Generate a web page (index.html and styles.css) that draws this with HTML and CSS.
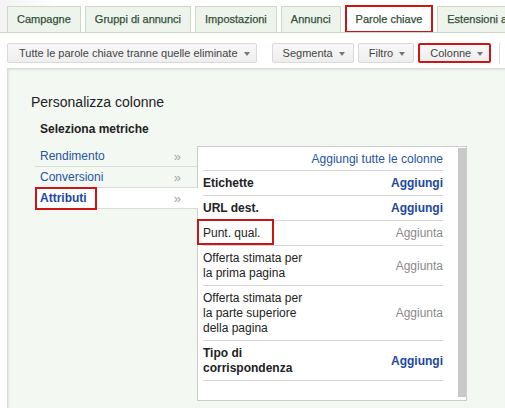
FILE: index.html
```html
<!DOCTYPE html>
<html lang="it">
<head>
<meta charset="utf-8">
<title>Personalizza colonne</title>
<link rel="stylesheet" href="styles.css">
</head>
<body>
<div class="tabs">
  <div class="tab">Campagne</div>
  <div class="tab">Gruppi di annunci</div>
  <div class="tab">Impostazioni</div>
  <div class="tab">Annunci</div>
  <div class="tab active">Parole chiave</div>
  <div class="tab">Estensioni annunci</div>
</div>
<div class="toolbar">
  <div class="btn wide">Tutte le parole chiave tranne quelle eliminate <span class="caret"></span></div>
  <div class="btn">Segmenta <span class="caret"></span></div>
  <div class="btn">Filtro <span class="caret"></span></div>
  <div class="btn marked">Colonne <span class="caret"></span></div>
  <div class="sep"></div>
</div>
<div class="panel">
  <div class="title">Personalizza colonne</div>
  <div class="subtitle">Seleziona metriche</div>
  <div class="picker">
    <div class="cats">
      <div class="cat"><span>Rendimento</span><span class="chev">»</span></div>
      <div class="cat"><span>Conversioni</span><span class="chev">»</span></div>
      <div class="cat sel"><span>Attributi</span><span class="chev">»</span><span class="mark mark-cat"></span></div>
    </div>
    <div class="box">
      <div class="list">
        <div class="row head"><span class="link">Aggiungi tutte le colonne</span></div>
        <div class="row"><span class="label b">Etichette</span><span class="add">Aggiungi</span></div>
        <div class="row"><span class="label b">URL dest.</span><span class="add">Aggiungi</span></div>
        <div class="row"><span class="label">Punt. qual.</span><span class="added">Aggiunta</span><span class="mark mark-row"></span></div>
        <div class="row"><span class="label">Offerta stimata per<br>la prima pagina</span><span class="added">Aggiunta</span></div>
        <div class="row"><span class="label">Offerta stimata per<br>la parte superiore<br>della pagina</span><span class="added">Aggiunta</span></div>
        <div class="row"><span class="label b">Tipo di<br>corrispondenza</span><span class="add">Aggiungi</span></div>
      </div>
      <div class="scroll"></div>
    </div>
  </div>
</div>
</body>
</html>
```
FILE: styles.css
```css
html, body {
  margin: 0;
  padding: 0;
  background: #fff;
  overflow: hidden;
  font-family: Arial, "Liberation Sans", sans-serif;
}
body {
  width: 505px;
  height: 408px;
}
.tabs {
  display: flex;
  gap: 4px;
  padding: 6px 0 0 7px;
  border-bottom: 1px solid #c7d6c2;
  height: 26px;
  white-space: nowrap;
  overflow: hidden;
  background: linear-gradient(to right, #f3f3f3 0, #fff 60px);
}
.tab {
  flex: none;
  height: 25px;
  line-height: 25px;
  padding: 0 9px;
  border: 1px solid #cbd9c6;
  border-bottom: none;
  background: #eef4ec;
  color: #34503b;
  font-size: 11px;
  font-weight: normal;
  -webkit-text-stroke: 0.25px #34503b;
}
.tab.active {
  background: #fff;
  border: 2px solid #cc1616;
  margin-top: -1px;
  height: 24px;
  line-height: 24px;
  padding: 0 9px;
  position: relative;
  z-index: 1;
}
.toolbar {
  display: flex;
  align-items: center;
  margin-top: 10px;
  padding-left: 7px;
  height: 20px;
}
.btn {
  flex: none;
  height: 18px;
  line-height: 18px;
  padding: 0 8px 0 10px;
  border: 1px solid #d9d9d9;
  border-radius: 2px;
  background: linear-gradient(#f8f8f8, #eeeeee);
  color: #444;
  font-size: 11px;
  margin-right: 4px;
}
.btn.wide {
  margin-right: 15px;
  padding: 0 6px 0 11px;
}
.btn.marked {
  border: 2px solid #cc1616;
  height: 16px;
  line-height: 16px;
  padding: 0 6px 0 10px;
}
.caret {
  display: inline-block;
  width: 0;
  height: 0;
  border-left: 3.5px solid transparent;
  border-right: 3.5px solid transparent;
  border-top: 4px solid #777;
  vertical-align: middle;
  margin-left: 3px;
  margin-top: -1px;
}
.btn.marked .caret {
  margin-left: 3px;
}
.sep {
  width: 1px;
  height: 21px;
  background: #dcdcdc;
  margin-left: 4px;
}
.panel {
  margin: 5px 0 0 7px;
  height: 314px;
  border: 1px solid #d8ddd6;
  border-right: none;
  border-bottom: none;
  background: #f4f8f2;
  box-shadow: inset 1px 1px 2px rgba(0, 0, 0, 0.08);
  padding: 25px 0 0 23px;
}
.title {
  font-size: 14px;
  line-height: 17px;
  color: #222;
}
.subtitle {
  font-size: 12px;
  line-height: 15px;
  font-weight: bold;
  color: #222;
  margin: 11px 0 0 9px;
}
.picker {
  display: flex;
  align-items: flex-start;
  margin: 9px 0 0 4px;
}
.cats {
  width: 162px;
  flex: none;
}
.cat {
  position: relative;
  display: flex;
  justify-content: space-between;
  align-items: center;
  padding: 3px 16px 2px 5px;
  line-height: 15px;
  font-size: 12px;
  color: #2654a6;
  border-bottom: 1px solid #d9ddd7;
}
.cat.sel {
  background: #fff;
  font-weight: bold;
  color: #1d48a2;
  margin-right: -1px;
  padding-right: 17px;
  z-index: 1;
}
.chev {
  color: #a8a8a8;
  font-size: 13px;
  line-height: 15px;
  font-weight: normal;
}
.mark {
  position: absolute;
  border: 2px solid #cc1616;
  box-sizing: border-box;
  pointer-events: none;
}
.mark-cat {
  left: 0;
  top: -1px;
  width: 62px;
  height: 23px;
}
.box {
  flex: none;
  display: flex;
  align-items: flex-start;
  width: 268px;
  height: 253px;
  border: 1px solid #cccccc;
  background: #fff;
}
.list {
  width: 240px;
  margin-left: 5px;
}
.row {
  position: relative;
  display: flex;
  justify-content: space-between;
  align-items: center;
  padding: 5px 0 4px;
  line-height: 15px;
  font-size: 12px;
  color: #222;
  border-bottom: 1px solid #d6d6d6;
}
.row.head {
  justify-content: flex-end;
  padding: 5px 0 3px;
}
.link {
  color: #2654a6;
}
.b {
  font-weight: bold;
}
.add {
  color: #1d48a2;
  font-weight: bold;
}
.added {
  color: #8a8a8a;
}
.mark-row {
  left: -6px;
  top: -2px;
  width: 77px;
  height: 26px;
}
.scroll {
  width: 8px;
  height: 249px;
  margin: 1px 0 0 15px;
  background: #c9c9c9;
}
```
